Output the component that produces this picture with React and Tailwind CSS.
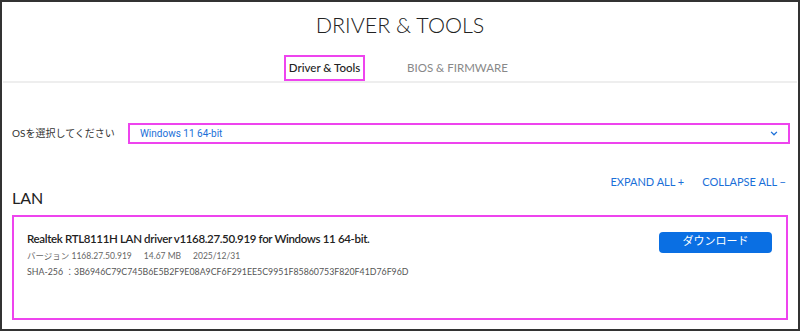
import React from "react";

export default function App() {
  const geo = { fontFamily: 'Lato, "Noto Sans CJK JP", sans-serif' };
  return (
    <div
      className="w-[800px] h-[331px] bg-white border-2 border-[#333] box-border flex flex-col overflow-hidden whitespace-nowrap"
      style={geo}
    >
      {/* Title */}
      <div className="h-[53px] shrink-0 flex items-center justify-center pb-[5px]">
        <h1 className="text-[21.5px] font-light text-[#222] leading-none">DRIVER &amp; TOOLS</h1>
      </div>
      {/* Tabs */}
      <div className="flex justify-center items-stretch gap-[42px] border-b-2 border-[#eeeeee] h-[28px] shrink-0 mx-[1px]">
        <div className="w-[81px] h-[26px] border-2 border-[#ee44ee] flex items-center justify-center text-[11.5px] font-medium text-[#222]">
          Driver &amp; Tools
        </div>
        <div className="h-[26px] flex items-center text-[11.5px] text-[#888] mr-[8px]">BIOS &amp; FIRMWARE</div>
      </div>
      {/* Select row */}
      <div className="flex items-center mt-[40px] pl-[10px] pr-[8px] shrink-0">
        <span className="text-[10px] text-[#333] w-[116px] shrink-0">OSを選択してください</span>
        <div
          className="flex-1 h-[21px] border-2 border-[#ee44ee] flex items-center justify-between pl-[10px] pr-[10px] text-[10px] text-[#1a6fd8]"
          style={{ fontFamily: 'Roboto, "Noto Sans", sans-serif' }}
        >
          <span>Windows 11 64-bit</span>
          <svg width="8" height="5" viewBox="0 0 9 6" fill="none" stroke="#1a6fd8" strokeWidth="1.5">
            <path d="M1 1l3.5 3.5L8 1" />
          </svg>
        </div>
      </div>
      {/* Expand / collapse */}
      <div className="flex justify-end gap-[18px] pr-[12px] mt-[32px] text-[11px] text-[#1a6fd8] leading-[12px] shrink-0">
        <span>EXPAND ALL +</span>
        <span>COLLAPSE ALL −</span>
      </div>
      <div className="pl-[10px] text-[16px] text-[#222] leading-[20px] shrink-0">LAN</div>
      {/* Card */}
      <div className="mx-[10px] mt-[7px] h-[105px] shrink-0 border-2 border-[#ee44ee] flex justify-between pl-[13px] pr-[14px]">
        <div className="flex flex-col pt-[13px]">
          <div className="text-[11.5px] font-semibold text-[#222] leading-[18px] tracking-[-0.35px]">
            Realtek RTL8111H LAN driver v1168.27.50.919 for Windows 11 64-bit.
          </div>
          <div className="text-[8.5px] text-[#666] mt-[1px] leading-[14px] flex gap-[12px]">
            <span>バージョン 1168.27.50.919</span>
            <span>14.67 MB</span>
            <span>2025/12/31</span>
          </div>
          <div className="text-[8.8px] text-[#555] mt-[2px] leading-[14px]">
            SHA-256 ：3B6946C79C745B6E5B2F9E08A9CF6F291EE5C9951F85860753F820F41D76F96D
          </div>
        </div>
        <div className="pt-[15px]">
          <button
            className="w-[113px] h-[21px] rounded-[4px] bg-[#0a6fe3] text-white text-[11px] flex items-center justify-center"
            style={{ fontFamily: 'Roboto, "Noto Sans CJK JP", sans-serif' }}
          >
            ダウンロード
          </button>
        </div>
      </div>
    </div>
  );
}
